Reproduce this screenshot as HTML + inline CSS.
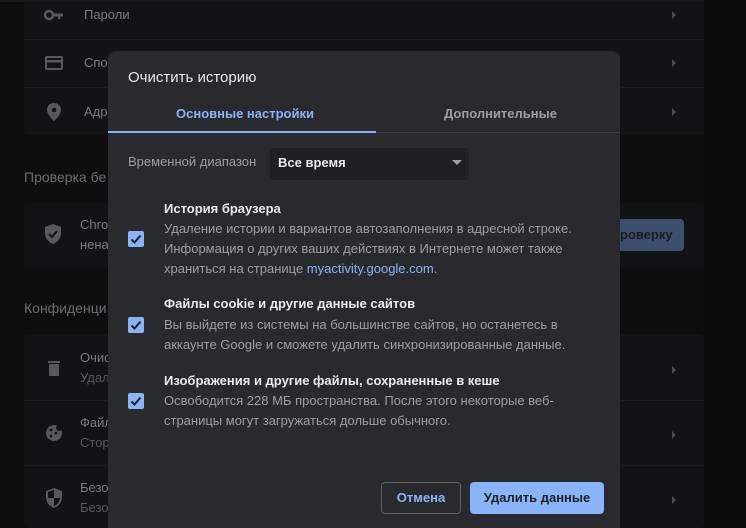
<!DOCTYPE html>
<html><head><meta charset="utf-8"><style>
*{margin:0;padding:0;box-sizing:border-box}
html,body{width:746px;height:528px;overflow:hidden}
body{background:#0e0e0f;font-family:"Liberation Sans",sans-serif;position:relative}
.abs{position:absolute}
.card{position:absolute;left:24px;width:680px;background:#121314;border-radius:4px}
.sep{position:absolute;left:24px;width:680px;height:1px;background:#1c1d1f}
.bt{position:absolute;color:#7b7c7e;font-size:13px;white-space:nowrap}
.bs{position:absolute;color:#58595b;font-size:13px;white-space:nowrap}
.hd{position:absolute;color:#6d6e70;font-size:14px;left:24px}
.chev{position:absolute;left:672px;width:0;height:0;border-top:4px solid transparent;border-bottom:4px solid transparent;border-left:4px solid #4a4b4d}
.dlg{position:absolute;left:108px;top:51px;width:512px;height:477px;background:#292a2d;border-radius:8px 8px 0 0}
.t{position:absolute;white-space:nowrap}
.cb{position:absolute;left:20px;width:16px;height:16px;background:#8ab4f8;border-radius:2px}
.cb svg{position:absolute;left:2px;top:2px}
.h{font-size:13px;color:#e8eaed;font-weight:bold;left:56px}
.d{font-size:13px;color:#9aa0a6;left:56px}
</style></head><body>
<div class="abs" style="left:0;top:0;width:746px;height:2px;background:#1a1b1c"></div>
<div class="abs" style="left:704px;top:0;width:42px;height:528px;background:#0b0b0b"></div>
<div class="card" style="top:2px;height:133px"></div>
<div class="sep" style="top:39px"></div>
<div class="sep" style="top:87px"></div>
<svg class="abs" style="left:44px;top:9px" width="20" height="12" viewBox="0 0 20 12"><circle cx="5" cy="6" r="4" fill="none" stroke="#58595b" stroke-width="2.5"/><rect x="8" y="4.5" width="11" height="3" fill="#58595b"/><rect x="14" y="7" width="2.5" height="3" fill="#58595b"/></svg>
<div class="bt" style="left:84px;top:7px">Пароли</div>
<svg class="abs" style="left:45px;top:56px" width="18" height="14"><rect x="1" y="1" width="16" height="12" rx="1" fill="none" stroke="#58595b" stroke-width="2"/><rect x="1" y="4" width="16" height="2.5" fill="#58595b"/></svg>
<div class="bt" style="left:84px;top:55px">Спо</div>
<svg class="abs" style="left:47px;top:103px" width="14" height="18" viewBox="0 0 14 18"><path d="M7 0C3 0 0 3 0 7c0 5 7 11 7 11s7-6 7-11C14 3 11 0 7 0z" fill="#58595b"/><circle cx="7" cy="7" r="2.3" fill="#121314"/></svg>
<div class="bt" style="left:84px;top:104px">Адр</div>
<div class="chev" style="top:11px"></div><div class="chev" style="top:59px"></div><div class="chev" style="top:108px"></div>
<div class="hd" style="top:169px">Проверка бе</div>
<div class="card" style="top:203px;height:64px"></div>
<svg class="abs" style="left:45px;top:224px" width="16" height="20" viewBox="0 0 16 20"><path d="M8 0L0 3v6c0 5 3.5 9.5 8 11 4.5-1.5 8-6 8-11V3z" fill="#58595b"/><path d="M4 10l3 3 5-6" stroke="#121314" stroke-width="2" fill="none"/></svg>
<div class="bt" style="left:80px;top:217px">Chro</div>
<div class="bt" style="left:80px;top:237px">нена</div>
<div class="abs" style="left:600px;top:219px;width:84px;height:32px;background:#3c4f6e;border-radius:4px"></div>
<div class="t" style="left:620px;top:227px;font-size:13px;color:#1b1c1e;font-weight:bold">роверку</div>
<div class="hd" style="top:300px">Конфиденци</div>
<div class="card" style="top:334px;height:194px"></div>
<div class="sep" style="top:400px"></div><div class="sep" style="top:465px"></div>
<svg class="abs" style="left:48px;top:360px" width="12" height="16"><rect x="0" y="1" width="12" height="2" fill="#58595b"/><rect x="1" y="4" width="10" height="12" rx="1" fill="#58595b"/></svg>
<div class="bt" style="left:80px;top:350px">Очис</div><div class="bs" style="left:80px;top:370px">Удал</div>
<svg class="abs" style="left:45px;top:424px" width="18" height="18"><circle cx="9" cy="9" r="8" fill="#58595b"/><circle cx="6" cy="6" r="1.4" fill="#121314"/><circle cx="11" cy="9" r="1.4" fill="#121314"/><circle cx="6" cy="12" r="1.4" fill="#121314"/><circle cx="14" cy="4" r="3" fill="#121314"/></svg>
<div class="bt" style="left:80px;top:415px">Файл</div><div class="bs" style="left:80px;top:435px">Стор</div>
<svg class="abs" style="left:46px;top:488px" width="16" height="20" viewBox="0 0 16 20"><path d="M8 0L0 3v6c0 5 3.5 9.5 8 11 4.5-1.5 8-6 8-11V3z" fill="#58595b"/><path d="M8 2v8H2v-1V4zM8 10h6c-.5 4-3 7-6 8z" fill="#121314"/></svg>
<div class="bt" style="left:80px;top:480px">Безо</div><div class="bs" style="left:80px;top:500px">Безо</div>
<div class="chev" style="top:366px"></div><div class="chev" style="top:431px"></div><div class="chev" style="top:496px"></div>

<div class="dlg">
 <div class="t" style="left:20px;top:18px;font-size:15px;color:#e8eaed">Очистить историю</div>
 <div class="t" style="left:68px;top:55px;font-size:13px;font-weight:bold;color:#8ab4f8">Основные настройки</div>
 <div class="t" style="left:336px;top:55px;font-size:13px;font-weight:bold;color:#9aa0a6">Дополнительные</div>
 <div class="abs" style="left:0;top:80px;width:268px;height:2px;background:#8ab4f8"></div>
 <div class="abs" style="left:268px;top:81px;width:244px;height:1px;background:#3c3d40"></div>
 <div class="t" style="left:20px;top:103px;font-size:13px;color:#9aa0a6">Временной диапазон</div>
 <div class="abs" style="left:162px;top:97px;width:199px;height:32px;background:#1f2022;border-radius:4px"></div>
 <div class="t" style="left:170px;top:104px;font-size:13px;color:#e8eaed;font-weight:bold">Все время</div>
 <div class="abs" style="left:344px;top:109px;border-left:5px solid transparent;border-right:5px solid transparent;border-top:5px solid #9aa0a6"></div>

 <div class="t h" style="top:150px">История браузера</div>
 <div class="t d" style="top:170px">Удаление истории и вариантов автозаполнения в адресной строке.</div>
 <div class="t d" style="top:190px">Информация о других ваших действиях в Интернете может также</div>
 <div class="t d" style="top:210px">храниться на странице <span style="color:#8ab4f8">myactivity.google.com</span>.</div>
 <div class="cb" style="top:180px"><svg width="12" height="12"><path d="M1.5 6.5l3 3 6-7" stroke="#202124" stroke-width="2" fill="none"/></svg></div>

 <div class="t h" style="top:245px">Файлы cookie и другие данные сайтов</div>
 <div class="t d" style="top:266px">Вы выйдете из системы на большинстве сайтов, но останетесь в</div>
 <div class="t d" style="top:286px">аккаунте Google и сможете удалить синхронизированные данные.</div>
 <div class="cb" style="top:266px"><svg width="12" height="12"><path d="M1.5 6.5l3 3 6-7" stroke="#202124" stroke-width="2" fill="none"/></svg></div>

 <div class="t h" style="top:322px">Изображения и другие файлы, сохраненные в кеше</div>
 <div class="t d" style="top:342px">Освободится 228 МБ пространства. После этого некоторые веб-</div>
 <div class="t d" style="top:362px">страницы могут загружаться дольше обычного.</div>
 <div class="cb" style="top:342px"><svg width="12" height="12"><path d="M1.5 6.5l3 3 6-7" stroke="#202124" stroke-width="2" fill="none"/></svg></div>

 <div class="abs" style="left:273px;top:431px;width:80px;height:32px;border:1px solid #5f6368;border-radius:4px;color:#8ab4f8;font-size:13px;font-weight:bold;text-align:center;line-height:30px">Отмена</div>
 <div class="abs" style="left:362px;top:431px;width:134px;height:32px;background:#8ab4f8;border-radius:4px;color:#202124;font-size:13px;font-weight:bold;text-align:center;line-height:32px">Удалить данные</div>
</div>
</body></html>
